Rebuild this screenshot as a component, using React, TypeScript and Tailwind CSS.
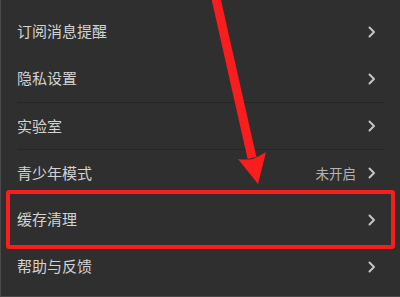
const rows: { label: string; value?: string; divider?: boolean; highlight?: boolean }[] = [
  { label: '订阅消息提醒' },
  { label: '隐私设置' },
  { label: '实验室', divider: true },
  { label: '青少年模式', value: '未开启', divider: true },
  { label: '缓存清理', highlight: true },
  { label: '帮助与反馈' },
];

function Chevron() {
  return (
    <svg width="8" height="12" viewBox="0 0 8 12" className="shrink-0">
      <path d="M1.5 1.5 L6 6 L1.5 10.5" fill="none" stroke="#c4c4c4" strokeWidth="2" strokeLinecap="round" strokeLinejoin="round" />
    </svg>
  );
}

export default function App() {
  return (
    <div
      className="relative h-[297px] w-[400px] overflow-hidden bg-[#2f2f2f] pt-2 border-l border-b border-[#4a4a4a]"
      style={{ fontFamily: '"Noto Sans CJK SC", "Noto Sans", sans-serif' }}
    >
      {rows.map((row) => (
        <div key={row.label} className="px-4">
          <div
            className={
              'flex h-[47px] items-center justify-between ' +
              (row.divider ? 'border-t border-[#262626]' : '')
            }
          >
            <span className="text-[15px] text-[#d2d2d2]">{row.label}</span>
            <div className="flex items-center gap-3 pr-2">
              {row.value ? <span className="text-[13.5px] text-[#b4b4b4]">{row.value}</span> : null}
              <Chevron />
            </div>
          </div>
        </div>
      ))}

      {/* red annotation box */}
      <div className="pointer-events-none absolute left-[5px] top-[190px] h-[59px] w-[389px] rounded-[3px] border-4 border-[#fa1d1d]" />

      {/* red annotation arrow */}
      <svg className="pointer-events-none absolute left-0 top-0" width="400" height="297" viewBox="0 0 400 297">
        <line x1="214" y1="-6" x2="251" y2="158" stroke="#fa1d1d" strokeWidth="9" />
        <path d="M257 184 L265 152 Q257 157 251.5 159 Q244 160 237 159 Z" fill="#fa1d1d" />
      </svg>
    </div>
  );
}
